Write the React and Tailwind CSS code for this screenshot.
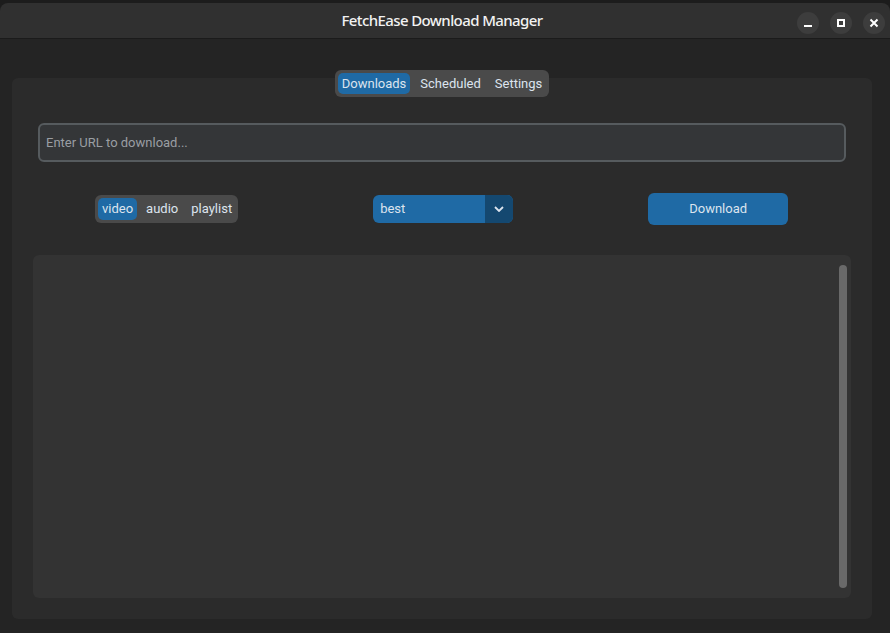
import React from "react";

function Seg({ items, active, className = "", pads }) {
  return (
    <div className={"flex items-center rounded-[6px] bg-[#4a4a4a] p-[3px] " + className}>
      {items.map((it, i) => (
        <div
          key={it}
          className={
            "flex h-full items-center justify-center rounded-[5px] text-[13px] text-[#dce4ee] " +
            pads[i] +
            " " +
            (it === active ? "bg-[#1f6aa5]" : "")
          }
        >
          {it}
        </div>
      ))}
    </div>
  );
}

export default function App() {
  return (
    <div
      className="flex h-[633px] w-[890px] flex-col bg-[#242424]"
      style={{ fontFamily: "Roboto, 'Noto Sans', sans-serif" }}
    >
      <div className="bg-[#1c1c1c] pt-[3px]">
        <div className="relative flex h-[36px] items-center justify-center rounded-t-[8px] border-b border-[#1b1b1b] bg-[#303030]">
          <div
            className="pr-[6px] text-[15px] font-medium tracking-[-0.6px] text-[#f2f2f2]"
            style={{ fontFamily: "'Noto Sans', sans-serif" }}
          >
            FetchEase Download Manager
          </div>
          <div className="absolute right-[5px] top-[9px] flex gap-[11px]">
            <div className="flex h-[22px] w-[22px] items-center justify-center rounded-full bg-[#3d3d3d]">
              <div className="mt-[5px] h-[2px] w-[8px] bg-white" />
            </div>
            <div className="flex h-[22px] w-[22px] items-center justify-center rounded-full bg-[#3d3d3d]">
              <div className="h-[8px] w-[8px] border-2 border-white" />
            </div>
            <div className="flex h-[22px] w-[22px] items-center justify-center rounded-full bg-[#3d3d3d]">
              <svg width="10" height="10" viewBox="0 0 10 10">
                <path d="M1.5 1.5L8.5 8.5M8.5 1.5L1.5 8.5" stroke="white" strokeWidth="2" />
              </svg>
            </div>
          </div>
        </div>
      </div>

      <div className="ml-[12px] mr-[18px] mt-[39px] flex h-[541px] flex-col rounded-[6px] bg-[#2b2b2b]">
        <Seg
          items={["Downloads", "Scheduled", "Settings"]}
          active="Downloads"
          pads={["px-[4px]", "pl-[10px] pr-[7px]", "pl-[7px] pr-[4px]"]}
          className="-mt-[8px] h-[27px] self-center"
        />
        <div className="mx-[26px] mt-[26px] flex h-[39px] items-center rounded-[6px] border-2 border-[#565b5e] bg-[#343638] px-[6px]">
          <span className="text-[13px] text-[#9a9ea3]">Enter URL to download...</span>
        </div>
        <div className="mt-[31px] flex h-[32px] items-center pl-[83px]">
          <Seg
            items={["video", "audio", "playlist"]}
            active="video"
            pads={["px-[4px]", "pl-[9px] pr-[6px]", "pl-[7px] pr-[3px]"]}
            className="h-[28px]"
          />
          <div className="ml-[135px] flex h-[28px] w-[140px] overflow-hidden rounded-[6px] bg-[#1f6aa5]">
            <div className="flex flex-1 items-center px-[7px] text-[13px] text-[#dce4ee]">best</div>
            <div className="flex w-[28px] items-center justify-center bg-[#144870]">
              <svg width="10" height="6" viewBox="0 0 10 6">
                <path d="M1 1L5 5L9 1" stroke="#dce4ee" strokeWidth="1.8" fill="none" />
              </svg>
            </div>
          </div>
          <div className="ml-[135px] flex h-[32px] w-[140px] items-center justify-center rounded-[6px] bg-[#1f6aa5] text-[13px] text-[#dce4ee]">
            Download
          </div>
        </div>
        <div className="mx-[21px] mb-[21px] mt-[30px] flex flex-1 justify-end rounded-[6px] bg-[#333333] py-[10px] pr-[4px]">
          <div className="w-[8px] rounded-full bg-[#696969]" />
        </div>
      </div>
    </div>
  );
}
